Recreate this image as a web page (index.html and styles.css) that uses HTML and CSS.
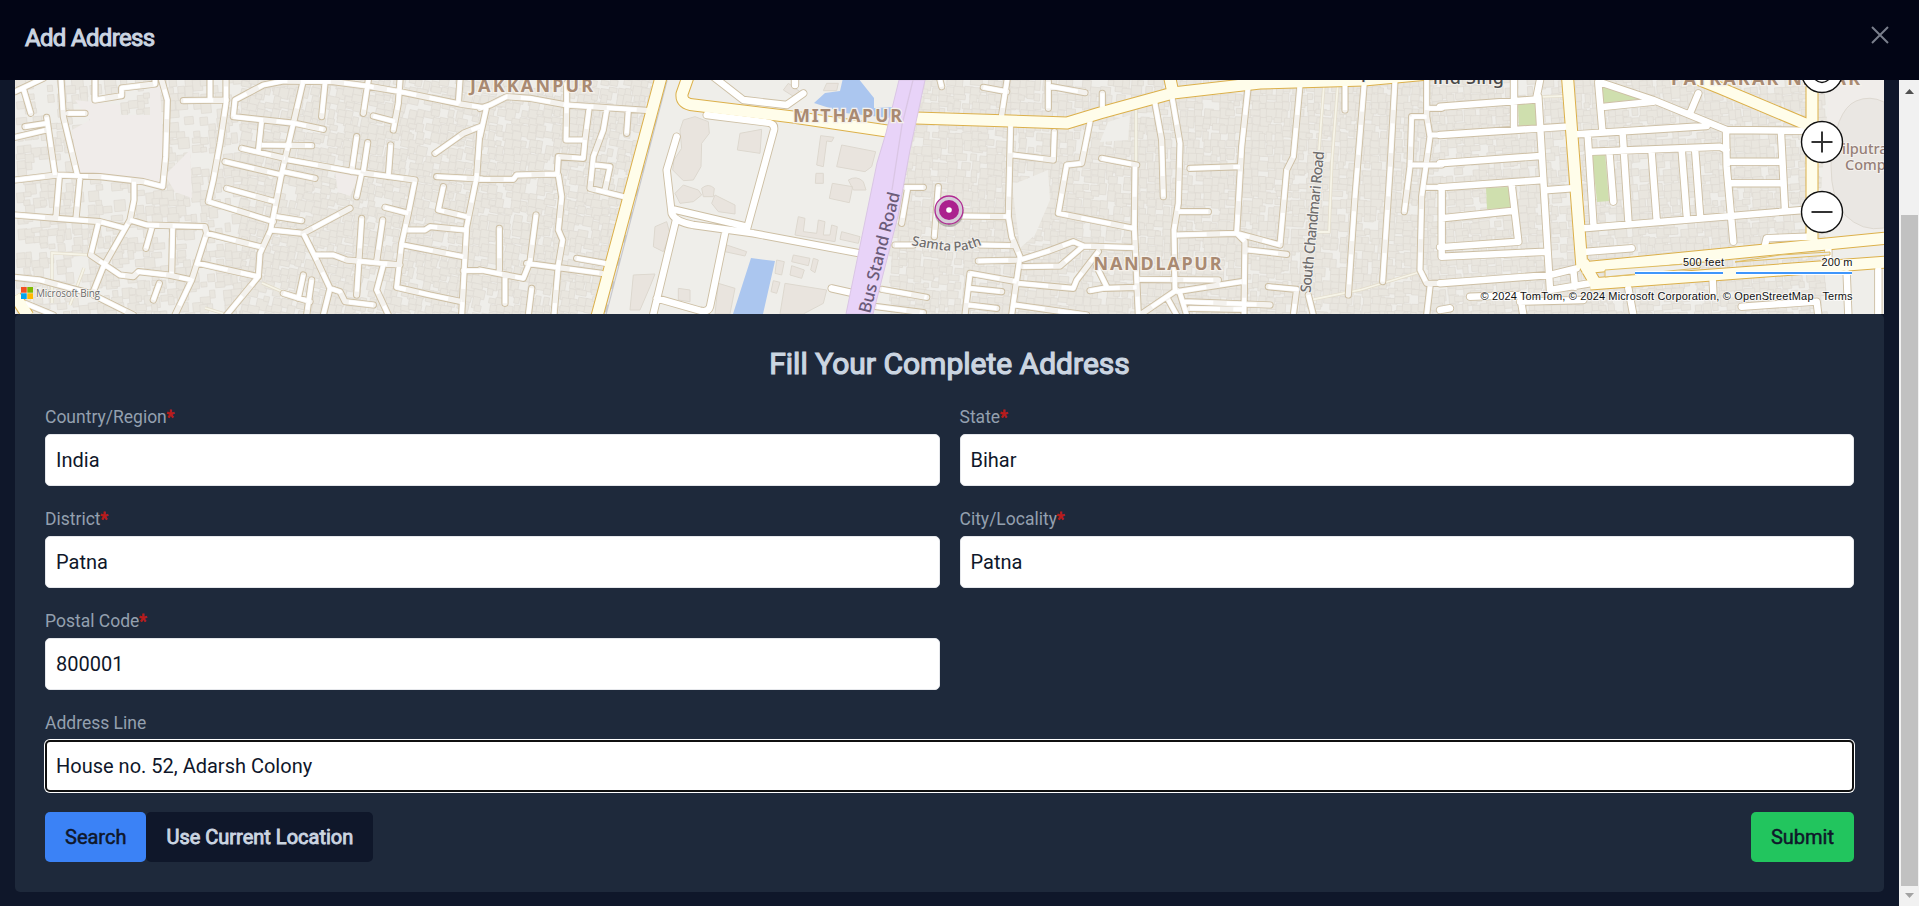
FILE: index.html
```html
<!DOCTYPE html>
<html lang="en">
<head>
<meta charset="utf-8">
<title>Add Address</title>
<link rel="stylesheet" href="styles.css">
</head>
<body>
<div class="modal">
  <header class="modal-header">
    <h1 class="modal-title">Add Address</h1>
    <button class="close" type="button" aria-label="Close"><svg width="18" height="18" viewBox="0 0 18 18"><path d="M1 1L17 17M17 1L1 17"/></svg></button>
  </header>
  <div class="modal-body">
    <main class="content">
      <svg class="map" width="1869" height="234" viewBox="15 80 1869 234">
        <defs>
          <g id="west" transform="scale(.33333)">
            <path d="M45 275L130 235M70 265L92 340M183 240L190 350L232 525M45 540L170 525L300 530L430 545L488 560L497 470L502 300L485 240M205 340H255M285 240V300L365 287V264L465 252V240M75 380L140 370M45 412L140 390M140 352L165 525M178 530L168 650M240 530L228 655M45 645L170 655L300 665L375 685M402 545V600L390 660L310 800L280 875M390 660L440 675L615 680L620 700L575 840L525 945M620 700L780 740M295 670L272 765L360 825L400 830L415 815L505 825L575 840M45 832L120 840L270 880L400 945M455 685L438 745M518 685L515 820M595 790L775 830L680 945M775 830L780 760L812 690L845 520L880 370L908 250M625 605L640 540L660 430L678 310V240M625 605L820 665M680 565L825 605M675 485L845 525M725 445L855 475M775 455L785 360M785 435L935 437M550 302L680 300M630 240V300M700 350L885 370L970 388M700 350L705 300L790 255L850 243L1000 245L1100 258L1200 275L1380 312L1445 322M1200 240L1195 310L1180 390M1120 348L1185 365M975 250L965 350M1105 240L1090 340M1380 240L1375 310M865 480L1060 515L1245 540L1225 640L1205 730L1190 862L1290 885L1385 905M850 515L945 535M1070 410L1055 515M1103 428L1090 515M1172 435L1165 530M1085 520L1070 590M830 650L905 662M812 690L910 700L1050 625M910 700L950 780L990 865L1020 875L1035 905L1120 915M990 865L970 945M945 765H1000L1040 780L1200 795M1085 655L1070 885M1148 660L1130 785M1150 795L1130 870L1165 945M1155 622L1225 640M1225 690H1275L1290 680L1395 690M1210 735L1390 770M1440 390L1430 530L1400 680L1385 945M1305 460L1390 400L1445 378M1310 530L1445 537M1330 560L1315 630L1400 650M850 880L930 905M910 825L895 895M935 840L920 945M460 900L478 850M1390 812H1445M75 910L160 945"/>
          </g>
          <g id="centre" transform="translate(480 70) scale(.33333)">
            <path d="M0 115L30 105L80 80L150 85L260 105L510 122M20 110L0 200M260 40V105L258 210H315L328 110M380 120L370 180L340 260L330 355L430 380M445 120L440 190M315 210L310 265L235 260L232 312L110 315L100 328H0M235 315L245 380L235 480L248 510L235 585L222 735M345 285L390 290L375 360M168 435L150 575L130 625L0 600M58 475V600M140 580L365 610M290 565L375 580M155 655L145 735M75 625V700M1275 352H1330M1283 355L1265 460M1375 350L1363 500M1245 525H1300M1205 658L1340 682M1190 710L1330 728M1380 30L1385 50"/>
          </g>
          <g id="campus" transform="translate(480 70) scale(.33333)">
            <path d="M680 135L865 158Q885 162 882 180L800 480M590 200L560 300L575 430Q585 455 640 465L820 490L1140 550M580 418L800 470M588 450L520 732M735 490L690 710Q685 728 660 722L530 685M1055 655L1112 668M700 20L790 90L920 105L970 70M945 25V45"/>
          </g>
          <g id="nandlapur" transform="translate(960 70) scale(.33333)">
            <path d="M70 52L140 65M142 25L125 135M265 35V115M265 48L375 68M427 70V110M152 160L145 440L155 500L180 560L155 735M160 255L280 270L283 185M0 438L145 440M390 155L365 280L320 285L295 430L520 475M425 265L530 285M525 290L523 470L535 735M585 100L605 210L610 380M635 75L660 220L655 400L642 480L645 660M865 45L845 230L830 490L855 515L852 735M690 295L840 290M655 425H745M650 495L830 490L960 525M1020 45L1000 260L980 300L960 525M865 540L980 553M1213 35L1185 380L1165 675M1305 30L1290 300L1268 635M1155 40V120M1400 30V140L1410 200L1385 380L1380 600L1400 640H1445M1355 140H1400M1355 140L1350 290L1333 425M1400 115H1445M1410 195H1445M1350 285H1445M1400 352H1445M1410 650L1400 735M55 573L180 570L260 545L340 515L370 528L525 533M60 525L165 527M190 590L300 588L370 528M175 640L340 655L350 630L415 545M390 662L430 655L530 652M410 590L440 650M30 610L170 635M30 610L15 735M30 655L125 665M25 705L110 715M165 705L380 735M540 628L775 630M650 665L845 635M670 695L930 705M650 660L540 735M625 690L650 735M660 670L680 735M690 715L850 718M925 650L1010 658L1000 735M1045 675L1060 735"/>
          </g>
          <g id="east" transform="translate(1440 0) scale(.33333)">
            <path d="M0 320L295 298M295 290L330 870M0 405L375 380M0 490L300 468M0 562L310 540M222 240V380M5 655L215 633M215 555L235 725L0 742M5 570V770L320 755M0 850L330 825L410 805M0 930L30 925M90 890L240 885L250 945M325 570L395 565M330 870L450 850M400 810L405 860M475 250L487 390M475 245L640 300L750 345L860 390L1090 392M495 320L640 305M775 280L750 340M410 403L800 378M443 405L460 670M548 400L565 660M455 455L840 440L860 450M508 455L520 605M635 460L650 660M725 450L740 645M765 445L780 645M858 390L860 500L880 725M1023 400L1035 630M865 485H1020M870 550H1025M430 685L1090 630M440 755L575 745M975 735L980 715L1100 710M1165 750V780M565 865L580 945M818 840L820 880M1220 820L1225 945M1315 810V945M905 920L1120 905M1130 905L1135 945M430 900L240 905M300 240L290 290"/>
          </g>
          <g id="main-roads">
            <path d="M664 66L596 320M689 74L682 94Q681 104 694 105L793 117L887 131M916 118L1010 121L1067 123L1100 113L1173 93L1260 83L1364 80L1450 72M1169 74L1173 93M1567 70L1582 268M1812 80V240M1690 76L1720 88L1808 125M1582 268L1888 238M1590 284L1888 262M1583 262L1597 286M15 296L28 316"/>
          </g>
        </defs>
        <rect x="15" y="80" width="1869" height="234" fill="#efeeea"/>
        <g id="buildings" class="buildings"></g>
        <path d="M75 100L120 105V115H150V85H160L165 180L155 183L78 174L72 130L90 120ZM165 175L190 150L192 198L175 192ZM335 172L362 170L350 196L338 192Z" fill="#f0ecea"/>
        <path d="M1830 78H1884V230H1818Z" fill="#f0edea"/>
        <path d="M655 80L672 80L612 314H595ZM672 80H900L850 314H606Z" fill="#efeeea"/>
        <path d="M1012 185L1048 170L1050 200L1035 235L1020 248ZM1108 122L1130 115L1128 140L1100 142Z" fill="#efeeea"/>
        <g class="landmarks" transform="translate(480 70) scale(.33333)">
          <path d="M610 150L645 140L685 155L688 190L665 220L663 290L640 330L610 332L578 300L582 270L605 235L600 180ZM780 190L845 178L840 250L772 240ZM1085 225L1187 245L1175 290L1155 305L1070 290ZM1022 197L1062 202L1055 215L1040 213L1030 290L1010 285ZM1057 340L1118 350L1108 398L1048 385ZM1105 330Q1130 315 1150 335L1158 360L1120 360ZM1008 310H1030V340H1006ZM585 370L610 345L655 360L665 375L640 395L600 400ZM665 355Q685 338 703 355L700 380L670 380ZM705 375L765 405V432L715 425L695 400ZM955 440L975 445L970 485L1010 490L1015 450L1035 455L1030 495H1050L1055 465L1072 470L1065 515L945 495ZM1085 485L1140 500L1135 520L1080 508ZM915 640L1040 660L1030 700L970 732H900ZM525 470L560 455L570 490L550 545L520 530ZM460 615L525 612L510 650L480 720H450ZM715 640L765 655L750 732H705ZM740 525L800 545L795 558L735 545ZM595 655L630 660V695L595 690ZM890 570L913 575L905 615L885 610ZM940 555L990 565L985 587L935 575ZM935 587L973 600L965 625L930 615ZM1000 565L1015 570L1005 608L992 600ZM880 632L900 637L890 670L873 665ZM910 60L925 40L960 65L945 82ZM1040 40H1075L1070 62H1030Z"/>
        </g>
        <path d="M814 103L825 93L840 91L843 78H858L874 98V108L893 107L890 118L845 113ZM751 258L775 261L763 314H733Z" fill="#abc6ef"/>
        <path d="M666 80L605 314" fill="none" stroke="#c6c7cb" stroke-width="3.5"/>
        <path d="M666 80L605 314" fill="none" stroke="#e5e5e8" stroke-width="1.4" stroke-dasharray="16 8"/>
        <path d="M1518 103L1535 102L1537 125L1519 126ZM1602 84L1640 99L1603 103ZM1592 154L1605 153L1609 201L1597 202ZM1486 188L1509 187L1511 208L1487 209Z" fill="#cfdfae"/>
        <path d="M1856 101Q1870 95 1884 102V228Q1862 232 1845 215Q1831 200 1831 165Q1835 110 1856 101Z" fill="#eae7e3" stroke="#ded9d1"/>
        <path id="lanes" class="lane-casing" d="M1324 84L1319 150M1338 82L1332 160L1329 232H1316M1310 300L1360 290L1420 272M1136 110V165M52 303V253L90 255M84 268L70 305M262 283L285 293M205 308L225 314M1512 80V98L1563 96"/>
        <path class="lane" d="M1324 84L1319 150M1338 82L1332 160L1329 232H1316M1310 300L1360 290L1420 272M1136 110V165M52 303V253L90 255M84 268L70 305M262 283L285 293M205 308L225 314M1512 80V98L1563 96"/>
        <g class="casing"><use href="#west"/><use href="#centre"/><use href="#nandlapur"/></g>
        <g class="casing wide"><use href="#campus"/><use href="#east"/></g>
        <use href="#main-roads" class="main-casing"/>
        <g class="street"><use href="#west"/><use href="#centre"/><use href="#nandlapur"/></g>
        <g class="street wide"><use href="#campus"/><use href="#east"/></g>
        <g class="dashes"><use href="#west"/><use href="#centre"/><use href="#nandlapur"/></g>
        <use href="#main-roads" class="main-fill"/>
        <path d="M1605 270L1700 263V268L1605 277ZM1780 255L1830 252V255L1735 262Z" fill="#efeeea" stroke="#e0bd62"/>
        <path d="M899 80H925L910 150L898 216L873 314H846L877 163L886 133Z" fill="#e8d3f8" stroke="#d9c5e4" stroke-width="1"/>
        <path d="M913 80L902 125L892 190" fill="none" stroke="#dac6e4" stroke-width="1.3"/>
        <g class="district">
          <text x="470" y="92" textLength="123">JAKKANPUR</text>
          <text x="793" y="122" textLength="109">MITHAPUR</text>
          <text x="1093.500" y="270" textLength="128">NANDLAPUR</text>
          <text x="1671" y="85" textLength="189">PATRAKAR NAGAR</text>
        </g>
        <g class="road-name">
          <text class="major" transform="translate(870 314) rotate(-76)" textLength="124">Bus Stand Road</text>
          <text transform="translate(1310.500 293) rotate(-84.500)" textLength="142">South Chandmari Road</text>
          <path id="samta" d="M911 245Q935 250 953 251Q968 252 990 241" fill="none"/>
          <text class="small"><textPath href="#samta">Samta Path</textPath></text>
          <text class="dark" x="1433" y="83.500" textLength="71">ind Sing</text>
          <text class="dark" x="1361" y="78">p</text>
        </g>
        <g class="place"><text x="1842" y="154">ilputra</text><text x="1845" y="170">Comp</text></g>
        <g class="brand">
          <path d="M21 287h5.700v5.700H21z" fill="#f25022"/><path d="M27.300 287H33v5.700h-5.700z" fill="#7fba00"/><path d="M21 293.300h5.700V299H21z" fill="#00a4ef"/><path d="M27.300 293.300H33V299h-5.700z" fill="#ffb900"/>
          <text x="36" y="296.500" textLength="64">Microsoft Bing</text>
        </g>
        <g class="legend">
          <text x="1724" y="266" text-anchor="end" textLength="41">500 feet</text><text x="1852.500" y="266" text-anchor="end" textLength="31">200 m</text>
          <text x="1480.500" y="300" textLength="333">© 2024 TomTom, © 2024 Microsoft Corporation, © OpenStreetMap</text><text x="1822.500" y="300" textLength="30">Terms</text>
        </g>
        <path d="M1635 273H1723M1736 273H1852" stroke="#fff" stroke-width="4"/>
        <path d="M1635 273H1723M1736 273H1852" stroke="#3f96fb" stroke-width="2"/>
        <g class="controls"><circle cx="1822" cy="72" r="20.500"/><circle cx="1822" cy="142" r="20.500"/><circle cx="1822" cy="212" r="20.500"/><circle cx="1822" cy="73.500" r="9"/><path d="M1811.500 142h21M1822 131.500v21M1811.500 212h21"/></g>
        <g><circle cx="949" cy="212.500" r="14.500" fill="#000" opacity=".22"/><circle cx="949" cy="210" r="14" fill="#d6ccd8" stroke="#b02a92" stroke-width="1.300"/><circle cx="949" cy="210" r="10" fill="#ab218e"/><circle cx="949" cy="210" r="2.800" fill="#fff"/></g>
      </svg>
      <form class="card">
        <h2 class="card-title">Fill Your Complete Address</h2>
        <div class="fields">
          <label class="field"><span class="label">Country/Region<b>*</b></span><input type="text" value="India"></label>
          <label class="field"><span class="label">State<b>*</b></span><input type="text" value="Bihar"></label>
          <label class="field"><span class="label">District<b>*</b></span><input type="text" value="Patna"></label>
          <label class="field"><span class="label">City/Locality<b>*</b></span><input type="text" value="Patna"></label>
          <label class="field"><span class="label">Postal Code<b>*</b></span><input type="text" value="800001"></label>
          <label class="field full"><span class="label">Address Line</span><input class="focused" type="text" value="House no. 52, Adarsh Colony"></label>
        </div>
        <div class="actions">
          <button class="btn search" type="button">Search</button>
          <button class="btn locate" type="button">Use Current Location</button>
          <button class="btn submit" type="button">Submit</button>
        </div>
      </form>
    </main>
    <div class="scrollbar">
      <svg width="20" height="20" viewBox="0 0 20 20"><path d="M6 14L10.500 9L15 14Z" fill="#505050"/></svg>
      <div class="thumb"></div>
      <svg width="20" height="20" viewBox="0 0 20 20"><path d="M6 7L10.500 12L15 7Z" fill="#a3a3a3"/></svg>
    </div>
  </div>
</div>
<script src="map.js"></script>
</body>
</html>
```

FILE: map.js
```js
// Fills the built-up blocks of the map with small building footprints.
const layer = document.getElementById('buildings');
const blocks = [
  { x0: 15, x1: 240, angle: -5, density: 0.6 },
  { x0: 240, x1: 480, angle: 12, density: 0.88 },
  { x0: 480, x1: 650, angle: 10, density: 0.88 },
  { x0: 890, x1: 1130, angle: 5, density: 0.9 },
  { x0: 1130, x1: 1430, angle: 3, density: 0.92 },
  { x0: 1430, x1: 1815, angle: -4, density: 0.85 }
];
let seed = 7;
const random = () => (seed = (seed * 16807) % 2147483647) / 2147483647;
let markup = '';
for (const b of blocks) {
  for (let y = 78; y < 316; y += 7.5) {
    for (let x = b.x0; x < b.x1; x += 8) {
      if (random() > b.density) continue;
      const w = (5 + random() * 7).toFixed(1);
      const h = (4.5 + random() * 7).toFixed(1);
      const px = (x + random() * 3).toFixed(1);
      const py = (y + random() * 3).toFixed(1);
      markup += `<rect x="${px}" y="${py}" width="${w}" height="${h}" transform="rotate(${b.angle} ${px} ${py})"/>`;
    }
  }
}
layer.innerHTML = markup;
```

FILE: styles.css
```css
* { box-sizing: border-box; }
body { margin: 0; background: #0f172a; font-family: Roboto, "Liberation Sans", sans-serif; font-size: 20px; overflow: hidden; }
.modal { display: flex; flex-direction: column; height: 906px; }
.modal-header { display: flex; justify-content: space-between; align-items: flex-start; height: 80px; padding: 22px 30px 0 25px; background: #020515; }
.modal-title { margin: 0; font-size: 24px; line-height: 32px; font-weight: 400; letter-spacing: -.68px; color: #cbd5e1; -webkit-text-stroke: 1px #cbd5e1; }
.close { display: flex; padding: 4px 0 0; border: 0; background: none; }
.close path { stroke: #7a7f8c; stroke-width: 2; }
.modal-body { display: flex; flex: 1; min-height: 0; }
.content { flex: 1; padding: 0 15px; }
.map { display: block; }

.buildings rect { fill: #e9e6df; stroke: #dfdbd4; stroke-width: .7; }
.landmarks path { fill: #e9e4de; stroke: #ddd8cf; stroke-width: 3; }
.lane-casing { fill: none; stroke: #e2dccb; stroke-width: 3.2px; }
.lane { fill: none; stroke: #f6f4e8; stroke-width: 1.8px; }
.casing, .street, .dashes { fill: none; stroke-linecap: round; stroke-linejoin: round; }
.casing { stroke: #cdbfa4; stroke-width: 21.5px; }
.street { stroke: #f4f2ee; stroke-width: 16px; }
.dashes { stroke: #fff; stroke-width: 12px; stroke-dasharray: 90 40; stroke-linecap: butt; }
.casing.wide { stroke-width: 25px; }
.street.wide { stroke: #fff; stroke-width: 19.5px; }
.main-casing { fill: none; stroke: #dcb04a; stroke-width: 13px; stroke-linejoin: round; }
.main-fill { fill: none; stroke: #fffdea; stroke-width: 11px; stroke-linejoin: round; }
.district { font: 700 18px "Noto Sans", sans-serif; fill: #a98a72; stroke: #f5f1eb; stroke-width: 2.5px; paint-order: stroke; }
.road-name { font: 500 14.5px "Noto Sans", sans-serif; fill: #6f6d6d; stroke: #f3f1ed; stroke-width: 2px; paint-order: stroke; }
.road-name path { stroke: none; }
.road-name .major { font-size: 17px; fill: #6b5b78; stroke: #e8d3f8; }
.road-name .small { font-size: 13.2px; }
.road-name .dark { font-size: 18px; fill: #4b4b4b; }
.place { font: 500 14.5px "Noto Sans", sans-serif; fill: #967f78; stroke: #f3f0ec; stroke-width: 2px; paint-order: stroke; }
.brand text { font: 10px "Open Sans", sans-serif; fill: #6b6b6b; stroke: #f7f5f2; stroke-width: 1.5px; paint-order: stroke; }
.legend { font: 11px "Liberation Sans", Arial, sans-serif; fill: #111; stroke: #fff; stroke-opacity: .7; stroke-width: 2px; paint-order: stroke; }
.controls { fill: #fff; stroke: #111; stroke-width: 1.4px; }
.controls path { stroke: #333; stroke-width: 2px; }

.card { padding: 30px; height: 578px; border-radius: 5px; background: #1e293b; }
.card-title { margin: 0 0 20px; font-size: 30px; line-height: 40px; font-weight: 400; text-align: center; color: #cbd5e1; -webkit-text-stroke: 1.2px #cbd5e1; }
.fields { display: grid; grid-template-columns: 1fr 1fr; gap: 20px; }
.field { display: flex; flex-direction: column; gap: 4px; }
.full { grid-column: 1 / -1; }
.label { padding-top: 1px; font-size: 17.5px; line-height: 25px; color: #94a0af; }
.label b { font-weight: 400; color: #b91c1c; -webkit-text-stroke: .8px #b91c1c; }
.field input { width: 100%; height: 52px; padding: 0 10px; border: 1px solid #e5e7eb; border-radius: 5px; background: #fff; color: #0f172a; font: 20px Roboto, "Liberation Sans", sans-serif; }
.field .focused { border: 2px solid #101010; padding: 0 9px; box-shadow: 0 0 0 1px #fff; }
.actions { display: flex; margin-top: 20px; }
.btn { height: 50px; padding: 0 20px; border: 0; border-radius: 5px; font: 20px Roboto, "Liberation Sans", sans-serif; color: #0f172a; -webkit-text-stroke: .5px currentColor; }
.search { background: #3b82f6; }
.locate { background: #0f172a; color: #cbd5e1; -webkit-text-stroke-width: .9px; }
.submit { margin-left: auto; background: #22c55e; }
.scrollbar { display: flex; flex-direction: column; width: 20px; background: #f1f1f1; }
.thumb { flex: 1; margin: 115px 1px 0 2px; background: #c1c1c1; }
```
